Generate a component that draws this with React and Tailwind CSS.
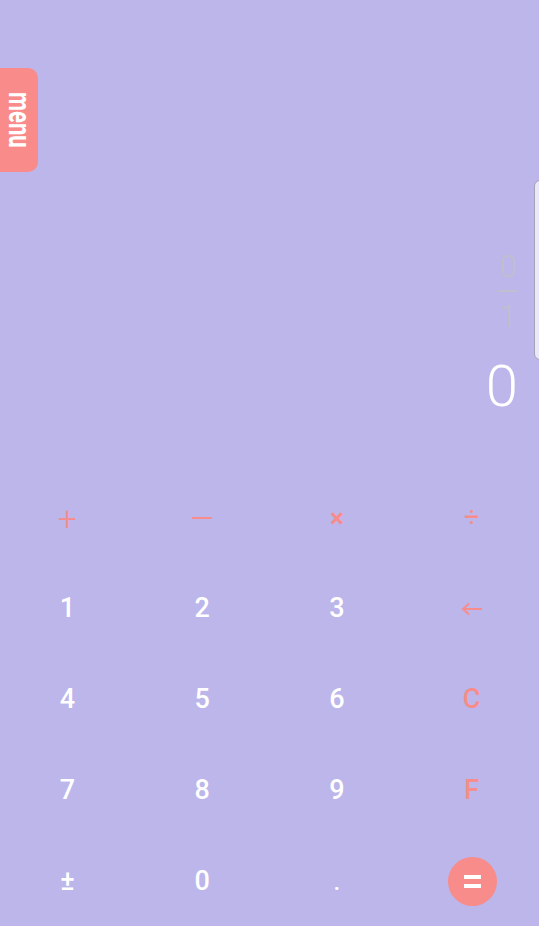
import React from "react";

const SALMON = "text-[#f78c8a]";

const Back = () => (
  <svg width="22" height="14" viewBox="0 0 22 14" fill="none" stroke="#f78c8a" strokeWidth="2">
    <path d="M2 7h19M8 1.5L2 7l6 5.5" />
  </svg>
);

const keys = [
  { label: "+", cls: `${SALMON} text-[34px] font-light` },
  { node: <span className="block w-[20px] h-[2px] bg-[#f78c8a]" /> },
  { label: "×", cls: `${SALMON} text-[26px] font-bold` },
  { label: "÷", cls: `${SALMON} text-[27px] font-normal` },
  { label: "1" },
  { label: "2" },
  { label: "3" },
  { node: <Back /> },
  { label: "4" },
  { label: "5" },
  { label: "6" },
  { label: "C", cls: `${SALMON} text-[27px] font-medium` },
  { label: "7" },
  { label: "8" },
  { label: "9" },
  { label: "F", cls: `${SALMON} text-[27px] font-medium` },
  { label: "±", cls: "text-white text-[27px] font-medium" },
  { label: "0" },
  { label: ".", cls: "text-white text-[24px] font-medium" },
  { equals: true },
];

const Key = ({ label, cls, node, equals }) => (
  <button className="flex items-center justify-center h-[91px] leading-none">
    {equals ? (
      <span className="flex flex-col items-center justify-center gap-[5px] w-[49px] h-[49px] rounded-full bg-[#f78c8a] translate-x-[1px]">
        <span className="block w-[17px] h-[4px] bg-white" />
        <span className="block w-[17px] h-[4px] bg-white" />
      </span>
    ) : node ? (
      node
    ) : (
      <span className={cls || "text-white text-[27px] font-medium"}>{label}</span>
    )}
  </button>
);

const App = () => {
  return (
    <div
      className="relative w-full h-[926px] overflow-hidden bg-[#bcb6ea] flex flex-col"
      style={{ fontFamily: "Roboto, 'Noto Sans', sans-serif" }}
    >
      {/* menu drawer handle */}
      <div className="absolute left-0 top-[68px] w-[38px] h-[104px] rounded-r-[10px] bg-[#f98c8a] flex items-center justify-center">
        <span className="[writing-mode:vertical-rl] text-white font-bold text-[22px] leading-none scale-x-[1.4]">
          menu
        </span>
      </div>

      {/* history drawer handle */}
      <div className="absolute left-[534px] top-[180px] w-[20px] h-[180px] rounded-l-[6px] bg-[#e9e7f8] border border-[#a4a2b4]" />

      {/* display */}
      <div className="h-[472px] shrink-0 flex flex-col items-end pr-[21px]">
        <div className="mt-[251px] flex flex-col items-center text-[#c0bfcd] text-[31px] font-light leading-none">
          <span>0</span>
          <span className="mt-[8px] mb-[9px] w-[20px] h-[2px] bg-[#c0bfcd]" />
          <span>1</span>
        </div>
        <div className="mt-[25px] text-white text-[58px] font-light leading-none">0</div>
      </div>

      {/* keypad */}
      <div className="grid grid-cols-4 shrink-0">
        {keys.map((k, i) => (
          <Key key={i} {...k} />
        ))}
      </div>
    </div>
  );
};

export default App;
